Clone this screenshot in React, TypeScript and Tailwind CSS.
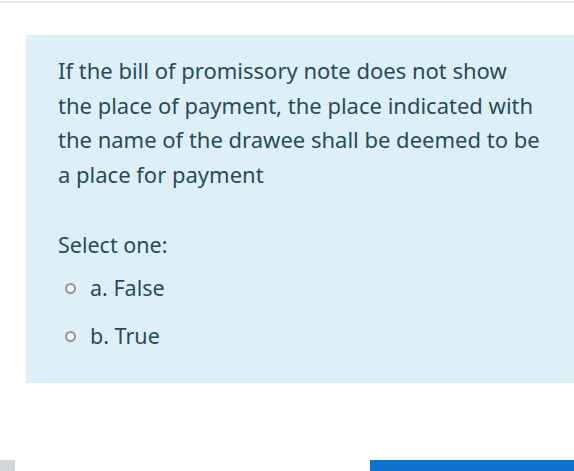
const options = [
  { key: 'a', label: 'False' },
  { key: 'b', label: 'True' },
];

export default function App() {
  return (
    <div
      className="relative w-[574px] h-[471px] overflow-hidden bg-white text-[#284c57]"
      style={{ fontFamily: '"Noto Sans", "Open Sans", sans-serif' }}
    >
      <div className="h-[2px] mt-px bg-[#e4e6e8]" />

      {/* question body */}
      <div className="ml-[26px] mt-[32px] h-[348px] bg-[#ddf0f8] pl-[32px] pt-[18px]">
        <p className="w-[484px] text-[22px] leading-[34.6px]">
          If the bill of promissory note does not show the place of payment, the place indicated with the name of the
          drawee shall be deemed to be a place for payment
        </p>

        <div className="mt-[37px] text-[21.5px] leading-[34px]">Select one:</div>

        <div className="mt-[9px] flex flex-col gap-[14px]">
          {options.map((o) => (
            <label key={o.key} className="flex items-center text-[21.5px] leading-[34px]">
              <span className="ml-[7px] mr-[14px] w-[11px] h-[11px] rounded-full border-[2px] border-[#8d9599] bg-white" />
              {o.key}. {o.label}
            </label>
          ))}
        </div>
      </div>

      {/* footer controls, cut off at the bottom */}
      <div className="absolute left-0 top-[460px] w-[15px] h-[11px] bg-[#d3d6da]" />
      <div className="absolute left-[370px] top-[460px] w-[204px] h-[11px] bg-[#1272cf]" />
    </div>
  );
}
